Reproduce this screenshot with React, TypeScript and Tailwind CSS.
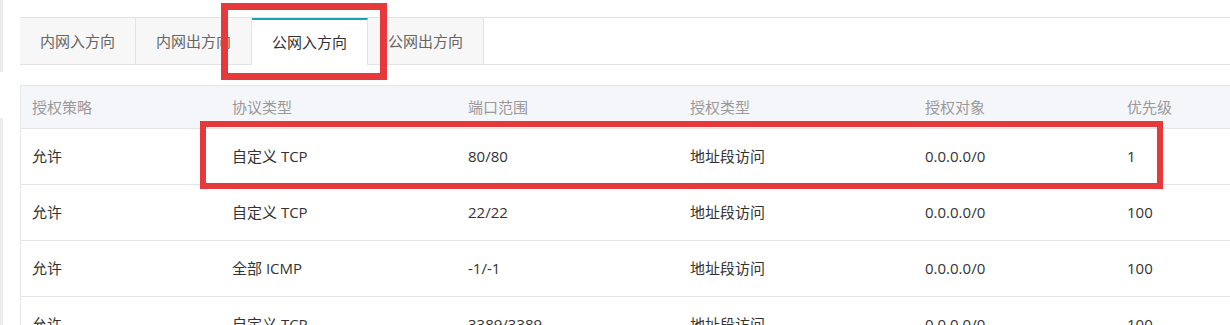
import { useState } from 'react';

const TABS = ['内网入方向', '内网出方向', '公网入方向', '公网出方向'];

const COLUMNS = ['授权策略', '协议类型', '端口范围', '授权类型', '授权对象', '优先级'];

const ROWS = [
  ['允许', '自定义 TCP', '80/80', '地址段访问', '0.0.0.0/0', '1'],
  ['允许', '自定义 TCP', '22/22', '地址段访问', '0.0.0.0/0', '100'],
  ['允许', '全部 ICMP', '-1/-1', '地址段访问', '0.0.0.0/0', '100'],
  ['允许', '自定义 TCP', '3389/3389', '地址段访问', '0.0.0.0/0', '100'],
];

const GRID = 'grid grid-cols-[200px_236px_222px_235px_202px_1fr]';

export default function App() {
  const [active, setActive] = useState(2);

  return (
    <main
      className="relative flex h-[325px] w-[1230px] overflow-hidden bg-white text-[15px] text-[#333]"
      style={{ fontFamily: '"Open Sans", "Noto Sans CJK SC", sans-serif' }}
    >
      {/* edge of the side panel */}
      <div className="flex w-[3px] shrink-0 flex-col">
        <div className="h-[72px] bg-[#ebebeb]" />
        <div className="h-[46px]" />
        <div className="flex-1 bg-[#ededed]" />
      </div>

      <div className="ml-[17px] flex min-w-0 flex-1 flex-col pt-[17px]">
        <nav className="flex h-[48px] shrink-0 border-y border-[#e3e3e3]">
          {TABS.map((t, i) => (
            <button
              key={t}
              onClick={() => setActive(i)}
              className={
                i === active
                  ? '-mb-px w-[116px] border-t-2 border-r border-[#e3e3e3] border-t-[#1d9fb6] bg-white text-[#333]'
                  : 'w-[116px] border-r border-l-0 border-[#e3e3e3] bg-[#f7f7f7] text-[#666]' +
                    (i === 0 ? ' border-l' : '')
              }
            >
              {t}
            </button>
          ))}
        </nav>

        <section className="mt-[20px] border-l border-t border-[#e6e6e6]">
          <div className={`${GRID} h-[42px] items-center bg-[#f5f6fa] text-[#999]`}>
            {COLUMNS.map((c) => (
              <div key={c} className="px-[11px]">
                {c}
              </div>
            ))}
          </div>
          {ROWS.map((r, i) => (
            <div key={i} className={`${GRID} h-[56px] items-center border-t border-[#e6e6e6]`}>
              {r.map((cell, j) => (
                <div key={j} className="px-[11px]">
                  {cell}
                </div>
              ))}
            </div>
          ))}
        </section>
      </div>

      {/* annotation boxes */}
      <div className="pointer-events-none absolute left-[221px] top-[3px] h-[77px] w-[166px] border-[7px] border-[#e5393b]" />
      <div className="pointer-events-none absolute left-[200px] top-[121px] h-[68px] w-[963px] border-[6px] border-[#e5393b]" />
    </main>
  );
}
